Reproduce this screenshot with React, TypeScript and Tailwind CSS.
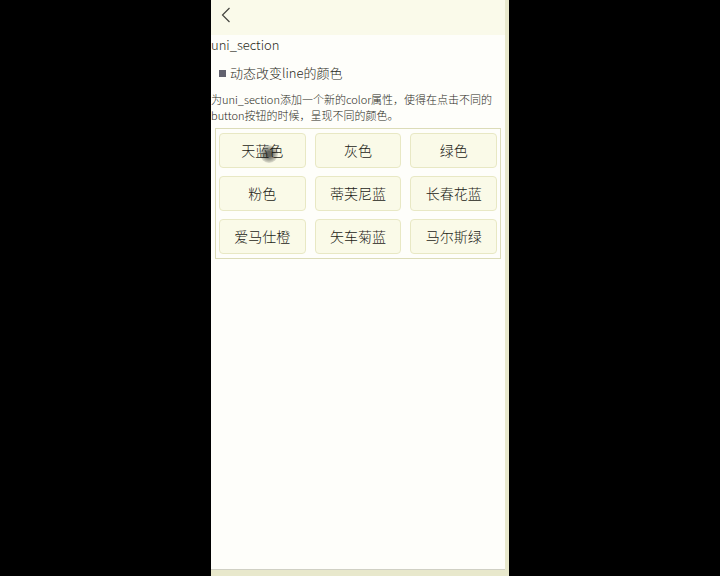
import React from "react";

const colors: string[] = [
  "天蓝色",
  "灰色",
  "绿色",
  "粉色",
  "蒂芙尼蓝",
  "长春花蓝",
  "爱马仕橙",
  "矢车菊蓝",
  "马尔斯绿",
];

export default function App() {
  return (
    <div className="flex min-h-screen justify-center bg-black font-['Noto_Sans_CJK_SC',sans-serif] font-light text-[#2a2a22]">
      <div className="flex w-full max-w-[298px] flex-col bg-[#e8e8cc] pr-1 pb-[6px]">
        <header className="flex h-[35px] items-start bg-[#fafaea] px-[7px] pt-[3px]">
          <button type="button" aria-label="返回" className="flex h-6 w-4 items-center justify-center">
            <svg width="10" height="16" viewBox="0 0 10 16" fill="none" stroke="#45453f" strokeWidth="1.2" aria-hidden="true">
              <path d="M8.5 1 1.5 8l7 7" />
            </svg>
          </button>
        </header>

        <main className="flex-1 border-b border-[#d0d0c4] bg-[#fefefa]">
          <h1 className="text-[13px] leading-5 font-light">uni_section</h1>
          <div className="mt-2 flex items-center gap-1 pl-2">
            <span className="h-[7px] w-[7px] bg-[#62626f]" />
            <h2 className="text-[13px] leading-5 font-light">动态改变line的颜色</h2>
          </div>
          <p className="mt-2 text-[11px] leading-4">
            为uni_section添加一个新的color属性，使得在点击不同的button按钮的时候，呈现不同的颜色。
          </p>
          <div className="mx-1 mt-[5px] grid grid-cols-3 gap-x-[9px] gap-y-2 border border-[#dcdcb8] px-[3px] py-1">
            {colors.map((name, i) => (
              <button
                key={name}
                type="button"
                className="relative h-[35px] rounded-[4px] border border-[#e8e8c4] bg-[#fafae8] text-[14px] text-[#1c1c16]"
              >
                {name}
                {i === 0 && (
                  <span className="absolute top-[11px] left-[40px] h-[18px] w-[18px] rounded-full bg-radial from-black/60 from-20% to-black/10 to-70%" />
                )}
              </button>
            ))}
          </div>
        </main>
      </div>
    </div>
  );
}
